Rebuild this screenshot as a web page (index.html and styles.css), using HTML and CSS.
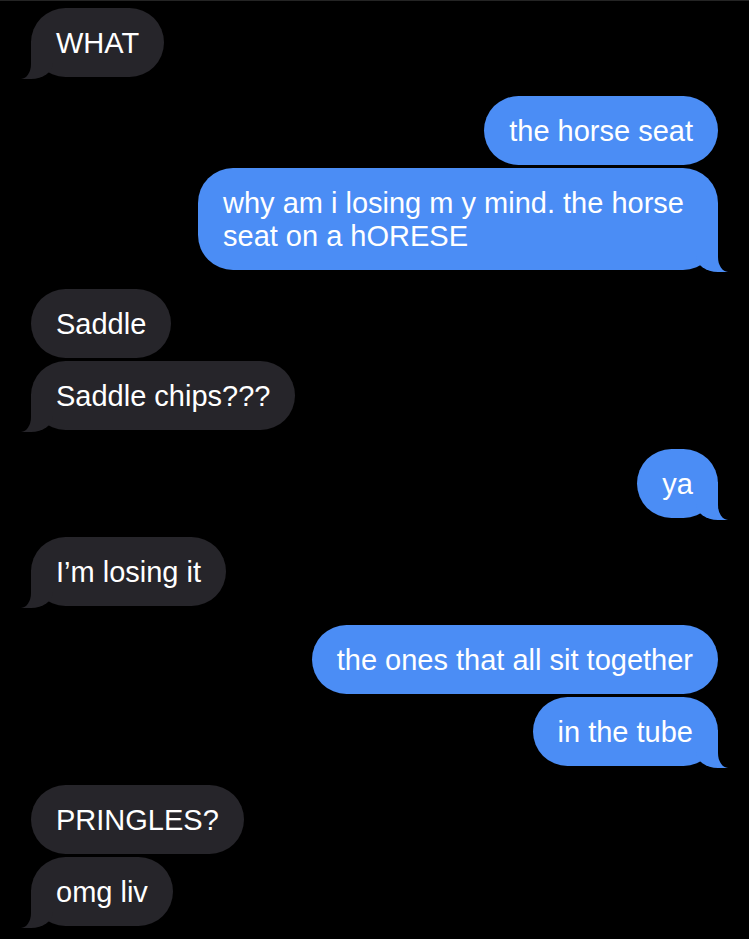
FILE: index.html
```html
<!DOCTYPE html>
<html lang="en">
<head>
<meta charset="utf-8">
<title>Messages</title>
<link rel="stylesheet" href="styles.css">
</head>
<body>
<main class="thread">
  <div class="bubble recv tail">WHAT</div>

  <div class="bubble sent group">the horse seat</div>
  <div class="bubble sent tail">why am i losing m y mind. the horse seat on a hORESE</div>

  <div class="bubble recv group">Saddle</div>
  <div class="bubble recv tail">Saddle chips???</div>

  <div class="bubble sent group tail">ya</div>

  <div class="bubble recv group tail">I’m losing it</div>

  <div class="bubble sent group">the ones that all sit together</div>
  <div class="bubble sent tail">in the tube</div>

  <div class="bubble recv group">PRINGLES?</div>
  <div class="bubble recv tail">omg liv</div>
</main>
</body>
</html>
```

FILE: styles.css
```css
html, body {
  margin: 0;
  padding: 0;
  background: #000;
}

body {
  width: 749px;
  height: 939px;
  overflow: hidden;
  border-top: 1px solid #242424;
  box-sizing: border-box;
  font-family: "Liberation Sans", Arial, sans-serif;
}

.thread {
  display: flex;
  flex-direction: column;
  gap: 3px;
  padding: 7px 31px 0 31px;
}

.bubble {
  position: relative;
  z-index: 0;
  max-width: 470px;
  padding: 19px 25px 17px 25px;
  font-size: 29px;
  line-height: 33px;
  color: #fff;
  border-radius: 35px;
}

.group {
  margin-top: 16px;
}

.recv {
  align-self: flex-start;
  background: #26252a;
}

.sent {
  align-self: flex-end;
  background: #4b8df5;
}

/* tails */
.tail::before,
.tail::after {
  content: "";
  position: absolute;
  bottom: -2px;
  z-index: -1;
}

.tail::after {
  z-index: 0;
}

.sent.tail::before {
  right: -10px;
  width: 32px;
  height: 38px;
  background: #4b8df5;
  border-bottom-left-radius: 22px 16px;
}

.sent.tail::after {
  right: -30px;
  width: 30px;
  height: 40px;
  background: #000;
  border-bottom-left-radius: 10px 15px;
}

.recv.tail::before {
  left: -10px;
  width: 32px;
  height: 38px;
  background: #26252a;
  border-bottom-right-radius: 22px 16px;
}

.recv.tail::after {
  left: -30px;
  width: 30px;
  height: 40px;
  background: #000;
  border-bottom-right-radius: 10px 15px;
}
```
